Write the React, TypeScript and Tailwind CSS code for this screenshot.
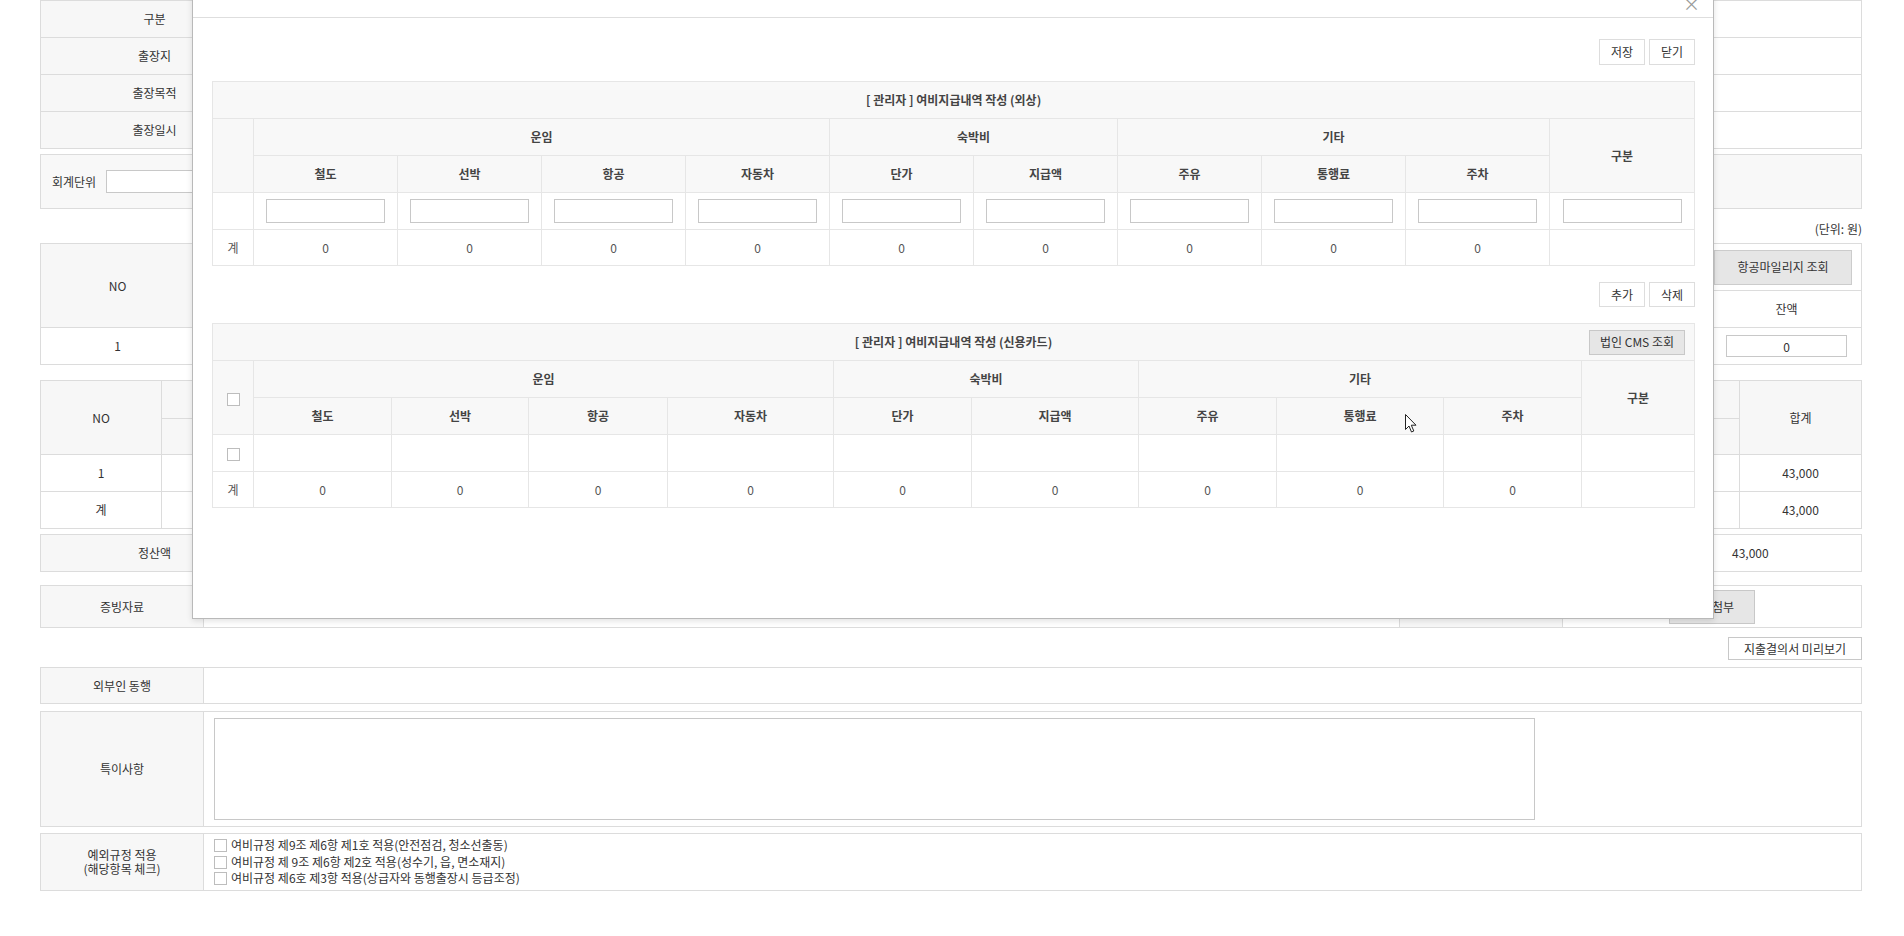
const font = "font-['Noto_Sans_CJK_KR','Noto_Sans',sans-serif]";

const line = "border border-[#dcdcdc]";
const head = "border border-[#dcdcdc] bg-[#f7f7f7] font-normal text-center";

const mb = "border border-[#e6e6e6]";
const mh = "border border-[#e6e6e6] bg-[#f8f8f8] font-bold text-center text-[#444]";

const fares = ["철도", "선박", "항공", "자동차"];
const lodging = ["단가", "지급액"];
const etc = ["주유", "통행료", "주차"];
const subs = [...fares, ...lodging, ...etc];

const widthsA = [41, 144, 144, 144, 144, 144, 144, 144, 144, 144, 145];
const widthsB = [41, 138, 137, 139, 166, 138, 167, 138, 167, 138, 113];

function Box() {
  return <span className="inline-block w-[13px] h-[13px] border border-[#bdbdbd] bg-white align-middle" />;
}

function GroupHeader({ first }: { first?: React.ReactNode }) {
  return (
    <>
      <tr className="h-[37px]">
        <th rowSpan={2} className={mh}>
          {first}
        </th>
        <th colSpan={4} className={mh}>운임</th>
        <th colSpan={2} className={mh}>숙박비</th>
        <th colSpan={3} className={mh}>기타</th>
        <th rowSpan={2} className={mh}>구분</th>
      </tr>
      <tr className="h-[37px]">
        {subs.map((s) => (
          <th key={s} className={mh}>
            {s}
          </th>
        ))}
      </tr>
    </>
  );
}

function TotalRow() {
  return (
    <tr className="h-[36px] text-center text-[#555]">
      <td className={mb}>계</td>
      {subs.map((s) => (
        <td key={s} className={mb}>
          0
        </td>
      ))}
      <td className={mb}></td>
    </tr>
  );
}

function Modal() {
  return (
    <div className="absolute left-[192px] top-[-20px] w-[1522px] h-[639px] bg-white border border-[#b9b9b9] shadow-[0_2px_6px_rgba(0,0,0,0.12)]">
      <div className="h-[37px] border-b border-[#dedede] flex items-end justify-end pr-[13px] pb-[5px]">
        <span className="text-[17px] leading-none text-[#9a9a9a]">×</span>
      </div>
      <div className="pl-[19px] pr-[18px]">
        <div className="mt-[21px] flex justify-end gap-[4px]">
          <button className="w-[46px] h-[26px] border border-[#dddddd] bg-white">저장</button>
          <button className="w-[46px] h-[26px] border border-[#dddddd] bg-white">닫기</button>
        </div>

        <table className="mt-[16px] w-full table-fixed border-collapse">
          <colgroup>
            {widthsA.map((w, i) => (
              <col key={i} style={{ width: w }} />
            ))}
          </colgroup>
          <tbody>
            <tr className="h-[37px]">
              <th colSpan={11} className={mh}>
                [ 관리자 ] 여비지급내역 작성 (외상)
              </th>
            </tr>
            <GroupHeader />
            <tr className="h-[37px]">
              <td className={mb}></td>
              {[...subs, "구분"].map((s) => (
                <td key={s} className={`${mb} text-center`}>
                  <input className="w-[119px] h-[24px] border border-[#c8c8c8] bg-white align-middle" />
                </td>
              ))}
            </tr>
            <TotalRow />
          </tbody>
        </table>

        <div className="mt-[16px] flex justify-end gap-[4px]">
          <button className="w-[46px] h-[25px] border border-[#dddddd] bg-white">추가</button>
          <button className="w-[46px] h-[25px] border border-[#dddddd] bg-white">삭제</button>
        </div>

        <table className="mt-[16px] w-full table-fixed border-collapse">
          <colgroup>
            {widthsB.map((w, i) => (
              <col key={i} style={{ width: w }} />
            ))}
          </colgroup>
          <tbody>
            <tr className="h-[37px]">
              <th colSpan={11} className={mh}>
                <div className="grid grid-cols-[1fr_auto_1fr] items-center">
                  <span />
                  <span>[ 관리자 ] 여비지급내역 작성 (신용카드)</span>
                  <span className="justify-self-end pr-[9px]">
                    <button className="w-[96px] h-[25px] border border-[#c8c8c8] bg-[#e6e6e6] font-normal text-[#333]">
                      법인 CMS 조회
                    </button>
                  </span>
                </div>
              </th>
            </tr>
            <GroupHeader first={<Box />} />
            <tr className="h-[37px]">
              <td className={`${mb} text-center`}>
                <Box />
              </td>
              {[...subs, "구분"].map((s) => (
                <td key={s} className={mb}></td>
              ))}
            </tr>
            <TotalRow />
          </tbody>
        </table>
      </div>
    </div>
  );
}

export default function App() {
  return (
    <div className={`relative w-[1904px] h-[936px] overflow-hidden bg-white text-[12px] text-[#333] ${font}`}>
      <div className="pl-[40px] pr-[42px]">
        <table className="w-full table-fixed border-collapse">
          <tbody>
            {["구분", "출장지", "출장목적", "출장일시"].map((l) => (
              <tr key={l} className="h-[37px]">
                <th className={`${head} w-[228px]`}>{l}</th>
                <td className={line}></td>
              </tr>
            ))}
          </tbody>
        </table>

        <div className="mt-[5px] h-[55px] border border-[#dcdcdc] bg-[#f8f8f8] flex items-center pl-[11px]">
          <span>회계단위</span>
          <input className="ml-[10px] w-[320px] h-[23px] border border-[#c8c8c8] bg-white" />
        </div>

        <div className="h-[34px] flex items-center justify-end pt-[6px]">(단위: 원)</div>

        <table className="w-full table-fixed border-collapse">
          <colgroup>
            <col className="w-[154px]" />
            <col />
            <col className="w-[150px]" />
          </colgroup>
          <tbody>
            <tr className="h-[47px]">
              <th rowSpan={2} className={head}>NO</th>
              <th className={head}></th>
              <td className={`${line} text-right pr-[9px]`}>
                <button className="w-[138px] h-[35px] border border-[#cccccc] bg-[#e6e6e6]">항공마일리지 조회</button>
              </td>
            </tr>
            <tr className="h-[37px]">
              <th className={head}></th>
              <td className={`${line} text-center`}>잔액</td>
            </tr>
            <tr className="h-[37px]">
              <td className={`${line} text-center`}>1</td>
              <td className={line}></td>
              <td className={`${line} text-center`}>
                <input
                  readOnly
                  defaultValue="0"
                  className="w-[121px] h-[22px] border border-[#c8c8c8] bg-white text-center align-middle"
                />
              </td>
            </tr>
          </tbody>
        </table>

        <table className="mt-[15px] w-full table-fixed border-collapse">
          <colgroup>
            <col className="w-[121px]" />
            <col />
            <col className="w-[120px]" />
            <col className="w-[122px]" />
          </colgroup>
          <tbody>
            <tr className="h-[38px]">
              <th rowSpan={2} className={head}>NO</th>
              <th className={head}></th>
              <th className={head}></th>
              <th rowSpan={2} className={head}>합계</th>
            </tr>
            <tr className="h-[36px]">
              <th className={head}></th>
              <th className={head}></th>
            </tr>
            {["1", "계"].map((n) => (
              <tr key={n} className="h-[37px] text-center">
                <td className={line}>{n}</td>
                <td className={line}></td>
                <td className={line}></td>
                <td className={line}>43,000</td>
              </tr>
            ))}
          </tbody>
        </table>

        <table className="mt-[5px] w-full table-fixed border-collapse">
          <tbody>
            <tr className="h-[37px]">
              <th className={`${head} w-[228px]`}>정산액</th>
              <td className={line}>
                <div className="flex justify-end">
                  <span className="w-[140px] pl-[11px]">43,000</span>
                </div>
              </td>
            </tr>
          </tbody>
        </table>

        <table className="mt-[13px] w-full table-fixed border-collapse">
          <colgroup>
            <col className="w-[163px]" />
            <col />
            <col className="w-[163px]" />
            <col className="w-[299px]" />
          </colgroup>
          <tbody>
            <tr className="h-[42px]">
              <th className={head}>증빙자료</th>
              <td className={line}></td>
              <th className={head}></th>
              <td className={`${line} pl-[106px]`}>
                <button className="w-[86px] h-[34px] border border-[#c8c8c8] bg-[#e6e6e6] align-middle">파일첨부</button>
              </td>
            </tr>
          </tbody>
        </table>

        <div className="mt-[9px] flex justify-end">
          <button className="w-[134px] h-[23px] border border-[#c8c8c8] bg-white">지출결의서 미리보기</button>
        </div>

        <table className="mt-[7px] w-full table-fixed border-collapse">
          <colgroup>
            <col className="w-[163px]" />
            <col />
          </colgroup>
          <tbody>
            <tr className="h-[36px]">
              <th className={head}>외부인 동행</th>
              <td className={line}></td>
            </tr>
          </tbody>
        </table>

        <table className="mt-[7px] w-full table-fixed border-collapse">
          <colgroup>
            <col className="w-[163px]" />
            <col />
          </colgroup>
          <tbody>
            <tr className="h-[115px]">
              <th className={head}>특이사항</th>
              <td className={`${line} pl-[10px]`}>
                <textarea className="block w-[1321px] h-[102px] border border-[#c8c8c8] bg-white resize-none" />
              </td>
            </tr>
          </tbody>
        </table>

        <table className="mt-[6px] w-full table-fixed border-collapse">
          <colgroup>
            <col className="w-[163px]" />
            <col />
          </colgroup>
          <tbody>
            <tr className="h-[57px]">
              <th className={`${head} leading-[14px]`}>
                예외규정 적용
                <br />
                (해당항목 체크)
              </th>
              <td className={`${line} pl-[10px] leading-[16.5px]`}>
                {[
                  "여비규정 제9조 제6항 제1호 적용(안전점검, 청소선출동)",
                  "여비규정 제 9조 제6항 제2호 적용(성수기, 읍, 면소재지)",
                  "여비규정 제6호 제3항 적용(상급자와 동행출장시 등급조정)",
                ].map((t) => (
                  <div key={t} className="flex items-center gap-[4px]">
                    <Box />
                    <span>{t}</span>
                  </div>
                ))}
              </td>
            </tr>
          </tbody>
        </table>
      </div>

      <Modal />

      <svg className="absolute left-[1405px] top-[414px]" width="13" height="20" viewBox="0 0 13 20">
        <path d="M0.5 0.5 L0.5 15.5 L4 12 L6.5 18 L8.8 17 L6.3 11.2 L11 11.2 Z" fill="white" stroke="#222" strokeWidth="1" />
      </svg>
    </div>
  );
}
